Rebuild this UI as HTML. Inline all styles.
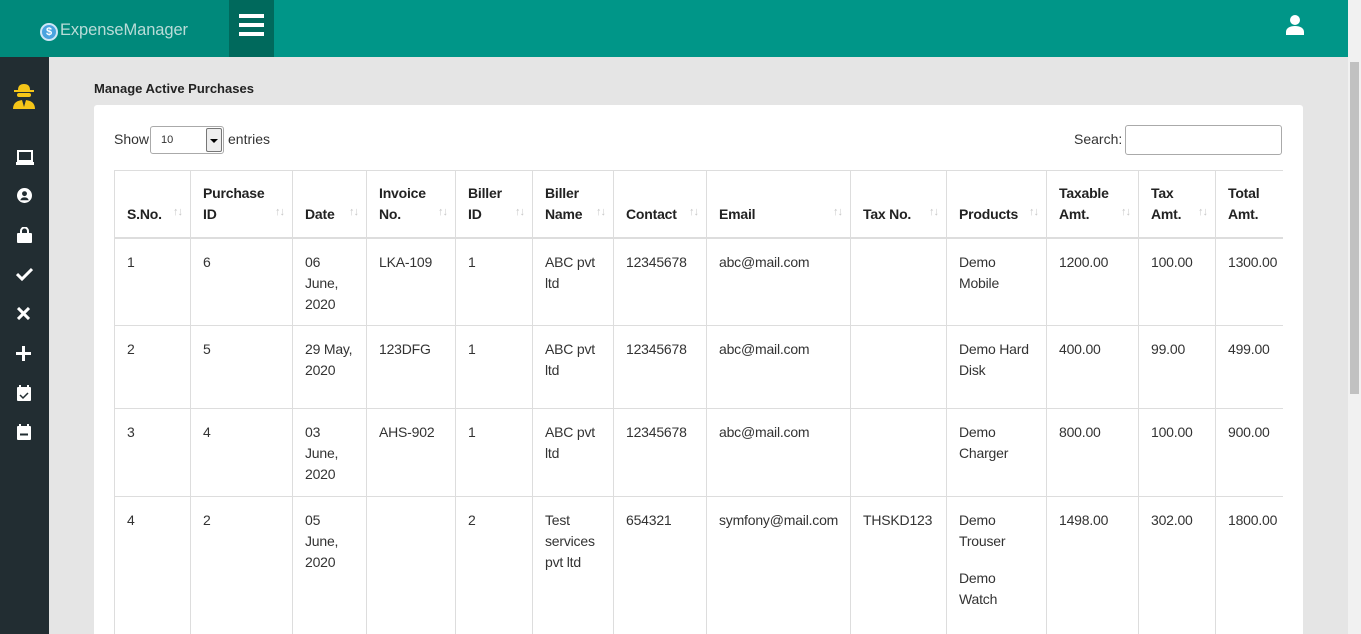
<!DOCTYPE html>
<html><head><style>
*{box-sizing:border-box;margin:0;padding:0}
html,body{width:1361px;height:634px;overflow:hidden}
body{font-family:"Liberation Sans",sans-serif;background:#e5e5e5;position:relative;color:#333;font-size:14px}
.top{position:absolute;left:0;top:0;width:1348px;height:57px;background:#009688}
.logo{position:absolute;left:0;top:0;width:229px;height:57px;background:#00897b}
.logo span{position:absolute;left:60px;top:21px;color:#b9dcd8;font-size:16.5px;letter-spacing:-0.1px}
.coin{position:absolute;left:40px;top:23px;width:18px;height:18px;border-radius:50%;background:#4aa3df;border:2px solid #cfe6f7;color:#fff;font-size:11px;font-weight:bold;text-align:center;line-height:14px}
.ham{position:absolute;left:229px;top:0;width:45px;height:57px;background:#00695c}
.ham i{position:absolute;left:10px;width:25px;height:4px;background:#fff}
.side{position:absolute;left:0;top:57px;width:49px;height:577px;background:#222d32}
.side svg{position:absolute;left:16px}
.sb{position:absolute;right:0;top:0;width:13px;height:634px;background:#f1f1f1}
.sb div{position:absolute;left:2px;top:62px;width:9px;height:332px;background:#c1c1c1}
h1{position:absolute;left:94px;top:81px;font-size:13px;font-weight:bold;color:#222}
.card{position:absolute;left:94px;top:105px;width:1209px;height:529px;background:#fff;border-radius:3px 3px 0 0;overflow:hidden}
.show{position:absolute;left:20px;top:26px}
.sel{position:absolute;left:56px;top:21px;width:74px;height:28px;border:1px solid #aaa;border-radius:3px;font-size:11px;padding:7px 10px}
.sel b{position:absolute;right:1px;top:1px;width:16px;height:24px;border:1px solid #777;background:#eee;border-radius:2px}
.sel b:after{content:"";position:absolute;left:3px;top:10px;border:4px solid transparent;border-top:4px solid #000}
.ent{position:absolute;left:134px;top:26px}
.srch{position:absolute;left:980px;top:26px}
.sinp{position:absolute;left:1031px;top:20px;width:157px;height:30px;border:1px solid #aaa;border-radius:3px}
table{position:absolute;left:20px;top:65px;border-collapse:collapse;table-layout:fixed;width:1201px}
td,th{border:1px solid #ddd;vertical-align:top;padding:13px 11px 0 12px;line-height:21px;text-align:left;font-size:14px;letter-spacing:-0.2px;overflow:hidden}
th{vertical-align:bottom;font-weight:bold;padding:0 24px 12px 12px;border-bottom:2px solid #ddd;position:relative;color:#222}
th:after{content:"↑↓";position:absolute;right:8px;bottom:14px;font-size:11px;color:#c8c8c8;font-weight:normal;letter-spacing:-1px}
.wrap{position:absolute;left:0;top:0;width:1189px;height:529px;overflow:hidden}
</style></head><body>
<div class="top">
<div class="logo"><div class="coin">$</div><span>ExpenseManager</span></div>
<div class="ham"><i style="top:14px"></i><i style="top:23px"></i><i style="top:32px"></i></div>
<svg style="position:absolute;left:1285px;top:14px" width="20" height="21" viewBox="0 0 20 21"><circle cx="10" cy="6" r="5" fill="#fff"/><path d="M1 21v-3c0-4 4-6 9-6s9 2 9 6v3z" fill="#fff"/></svg>
</div>
<div class="side">
<svg style="top:24px;left:10px" width="28" height="28" viewBox="0 0 28 28"><path d="M8 9c0-4 2-6 6-6s6 2 6 6h4v2H4V9z" fill="#f5c518"/><rect x="7" y="12" width="14" height="4" rx="2" fill="#f5c518"/><path d="M3 28c0-6 4-9 11-9s11 3 11 9z" fill="#f5c518"/><path d="M12 19l2 7 2-7z" fill="#222d32"/></svg>
<svg style="top:93px" width="18" height="16" viewBox="0 0 18 16"><rect x="2" y="1" width="14" height="10" fill="none" stroke="#fff" stroke-width="2"/><rect x="0" y="12" width="18" height="3" fill="#fff"/></svg>
<svg style="top:131px;left:17px" width="15" height="15" viewBox="0 0 16 16"><circle cx="8" cy="8" r="8" fill="#fff"/><circle cx="8" cy="6" r="2.6" fill="#222d32"/><path d="M3.5 13c1-2.5 2.5-3 4.5-3s3.5.5 4.5 3z" fill="#222d32"/></svg>
<svg style="top:170px;left:17px" width="15" height="16" viewBox="0 0 15 16"><path d="M4 6V4a3.5 3.5 0 017 0v2" fill="none" stroke="#fff" stroke-width="2"/><rect x="0" y="6" width="15" height="10" rx="1" fill="#fff"/></svg>
<svg style="top:210px" width="17" height="14" viewBox="0 0 17 14"><path d="M1 7l5 5L16 2" fill="none" stroke="#fff" stroke-width="3"/></svg>
<svg style="top:250px;left:17px" width="13" height="13" viewBox="0 0 13 13"><path d="M1 1l11 11M12 1L1 12" stroke="#fff" stroke-width="3"/></svg>
<svg style="top:289px" width="15" height="15" viewBox="0 0 15 15"><path d="M7.5 0v15M0 7.5h15" stroke="#fff" stroke-width="3"/></svg>
<svg style="top:328px;left:17px" width="14" height="16" viewBox="0 0 14 16"><rect x="0" y="2" width="14" height="14" rx="1" fill="#fff"/><rect x="2" y="0" width="2" height="4" fill="#fff"/><rect x="10" y="0" width="2" height="4" fill="#fff"/><path d="M3 10l3 3 5-5" fill="none" stroke="#222d32" stroke-width="1.5"/></svg>
<svg style="top:367px;left:17px" width="14" height="16" viewBox="0 0 14 16"><rect x="0" y="2" width="14" height="14" rx="1" fill="#fff"/><rect x="2" y="0" width="2" height="4" fill="#fff"/><rect x="10" y="0" width="2" height="4" fill="#fff"/><rect x="3" y="9.5" width="8" height="2" fill="#222d32"/></svg>
</div>
<h1>Manage Active Purchases</h1>
<div class="card"><div class="wrap">
<div class="show">Show</div><div class="sel">10<b></b></div><div class="ent">entries</div>
<div class="srch">Search:</div><div class="sinp"></div>
<table>
<colgroup><col style="width:76px"><col style="width:102px"><col style="width:74px"><col style="width:89px"><col style="width:77px"><col style="width:81px"><col style="width:93px"><col style="width:144px"><col style="width:96px"><col style="width:100px"><col style="width:92px"><col style="width:77px"><col style="width:100px"></colgroup>
<tr style="height:67px"><th>S.No.</th><th>Purchase ID</th><th>Date</th><th>Invoice No.</th><th>Biller<br>ID</th><th>Biller Name</th><th>Contact</th><th>Email</th><th>Tax No.</th><th>Products</th><th>Taxable Amt.</th><th>Tax Amt.</th><th>Total<br>Amt.</th></tr>
<tr style="height:88px"><td>1</td><td>6</td><td>06 June, 2020</td><td>LKA-109</td><td>1</td><td>ABC pvt ltd</td><td>12345678</td><td>abc@mail.com</td><td></td><td>Demo Mobile</td><td>1200.00</td><td>100.00</td><td>1300.00</td></tr>
<tr style="height:83px"><td>2</td><td>5</td><td>29 May,<br>2020</td><td>123DFG</td><td>1</td><td>ABC pvt ltd</td><td>12345678</td><td>abc@mail.com</td><td></td><td>Demo Hard Disk</td><td>400.00</td><td>99.00</td><td>499.00</td></tr>
<tr style="height:88px"><td>3</td><td>4</td><td>03 June, 2020</td><td>AHS-902</td><td>1</td><td>ABC pvt ltd</td><td>12345678</td><td>abc@mail.com</td><td></td><td>Demo Charger</td><td>800.00</td><td>100.00</td><td>900.00</td></tr>
<tr style="height:150px"><td>4</td><td>2</td><td>05 June, 2020</td><td></td><td>2</td><td>Test services pvt ltd</td><td>654321</td><td><span style="white-space:nowrap">symfony@mail.com</span></td><td>THSKD123</td><td>Demo Trouser<div style="height:16px"></div>Demo Watch</td><td>1498.00</td><td>302.00</td><td>1800.00</td></tr>
</table></div></div>
<div class="sb"><div></div></div>
</body></html>
